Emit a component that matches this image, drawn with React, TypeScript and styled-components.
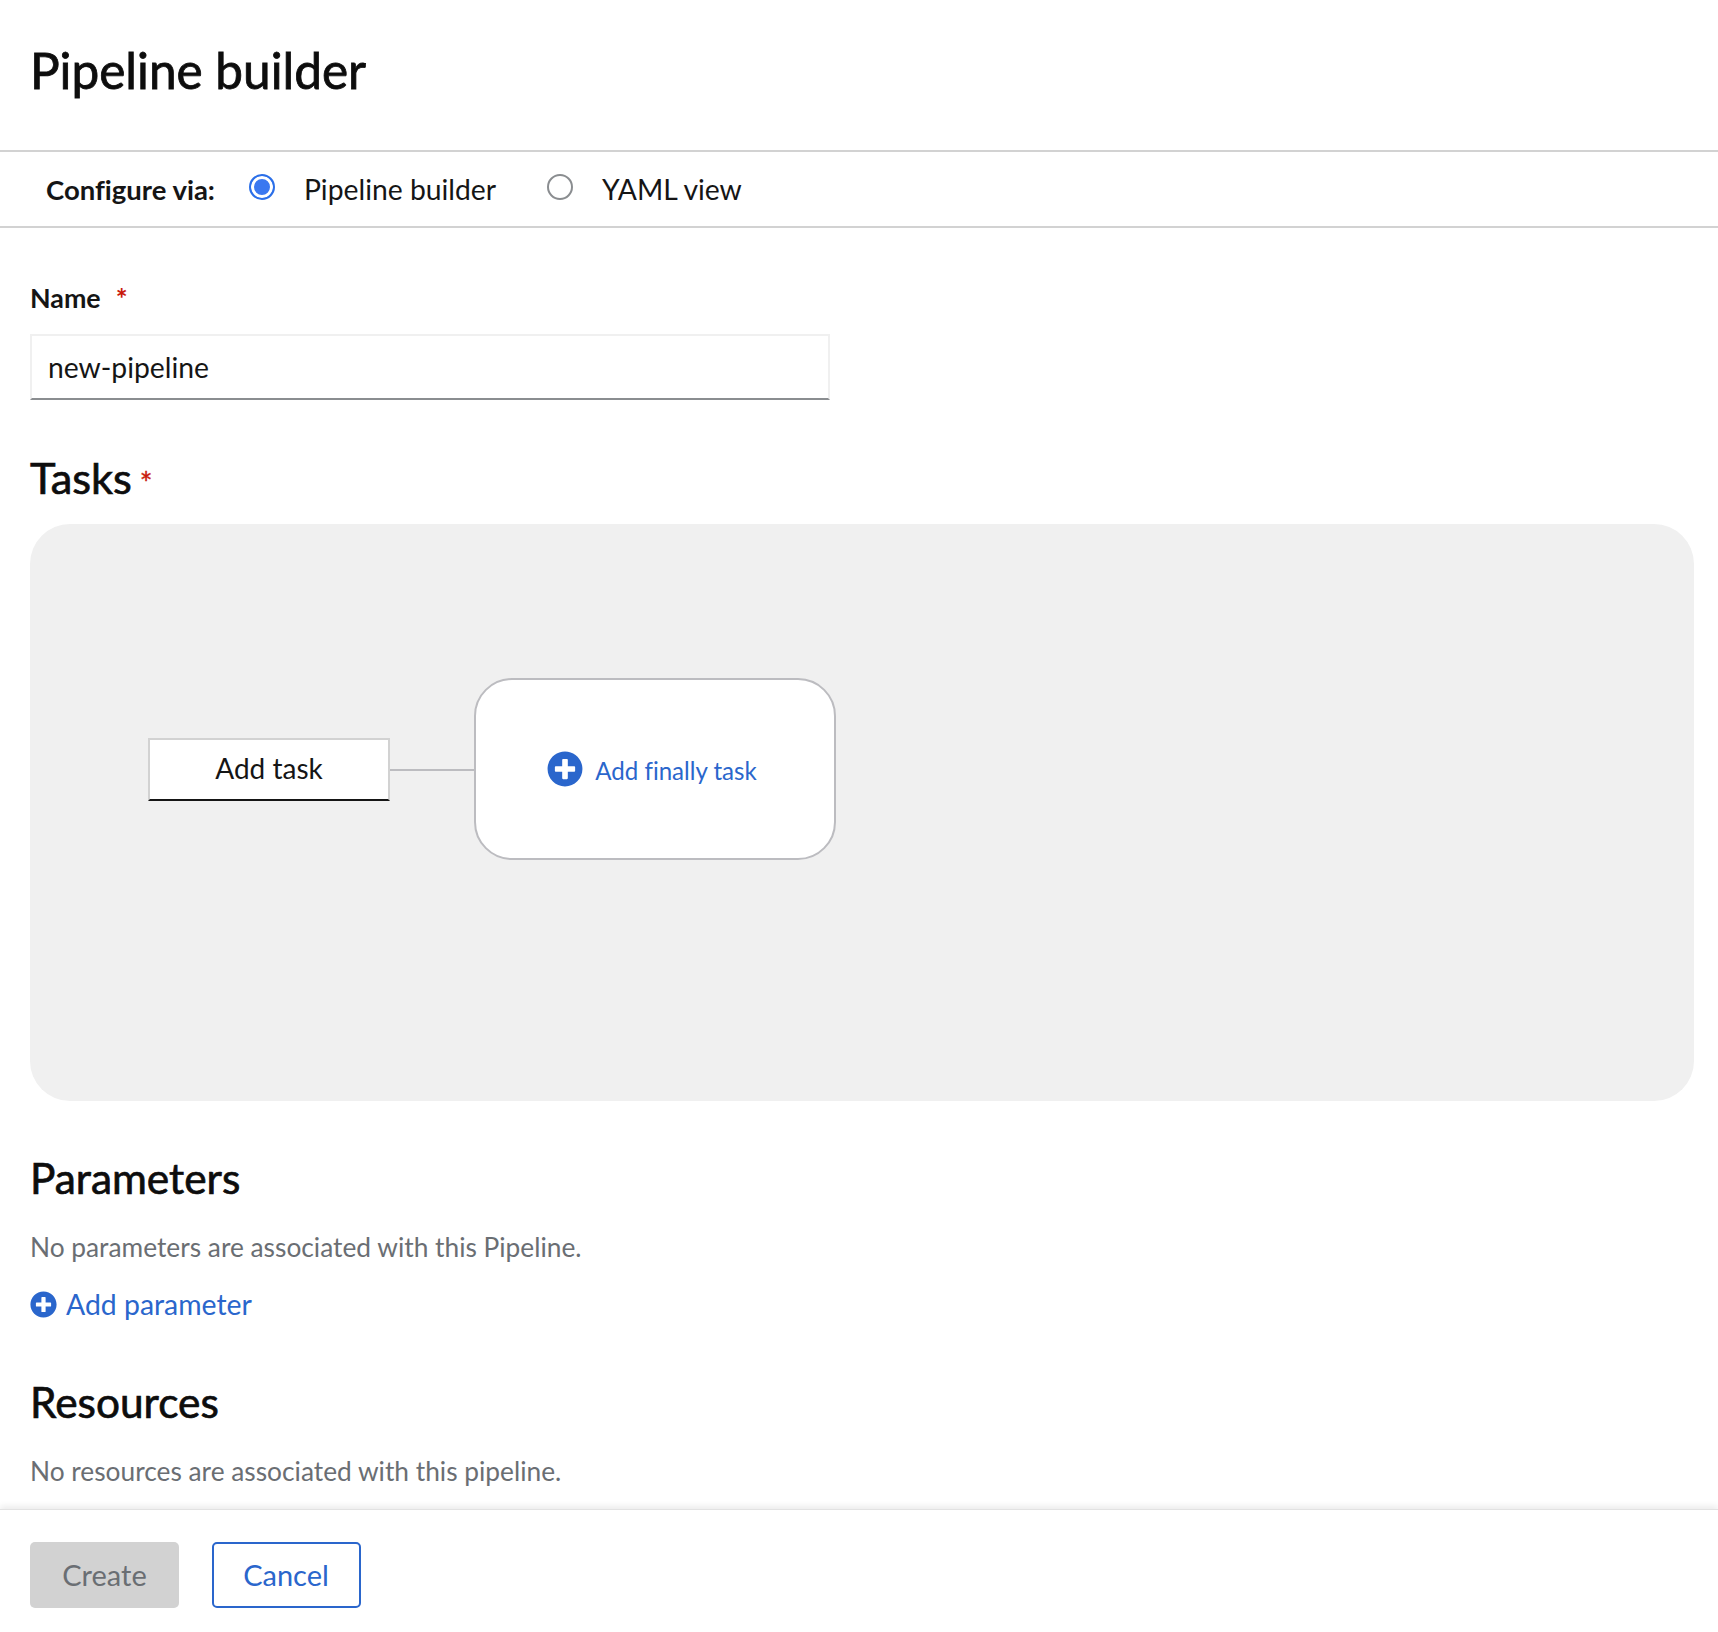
import React from "react";
import styled, { createGlobalStyle } from "styled-components";
import { FaPlusCircle } from "react-icons/fa";

const Global = createGlobalStyle`
  html, body { margin: 0; padding: 0; background: #fff; }
  body {
    font-family: Lato, "Liberation Sans", sans-serif;
    color: #151515;
    font-variant-ligatures: none;
  }
  * { box-sizing: border-box; }
`;

const Page = styled.div`
  height: 1632px;
  display: flex;
  flex-direction: column;
  overflow: hidden;
`;
const Header = styled.header`
  height: 150px;
  padding: 40px 30px 0;
`;
const Title = styled.h1`
  margin: 0;
  font-size: 49.5px;
  line-height: 60px;
  font-weight: 400;
  -webkit-text-stroke: 0.8px #0d0d0d;
  color: #0d0d0d;
`;
const ConfigBar = styled.div`
  height: 78px;
  border-top: 2px solid #d2d2d2;
  border-bottom: 2px solid #d2d2d2;
  padding-left: 46px;
  display: flex;
  align-items: center;
  font-size: 28.3px;
`;
const ConfigLabel = styled.span`
  font-weight: 700;
  font-size: 27.5px;
  margin-right: 34px;
`;
const RadioLabel = styled.label`
  display: flex;
  align-items: center;
  gap: 29px;
  margin-right: 51px;
`;
const Radio = styled.span<{ $on?: boolean }>`
  width: 26px;
  height: 26px;
  border-radius: 50%;
  margin-top: -4px;
  border: 2px solid ${(p) => (p.$on ? "#2b6fe8" : "#8a8d90")};
  background: ${(p) => (p.$on ? "#3b78f0" : "#fff")};
  box-shadow: ${(p) => (p.$on ? "inset 0 0 0 3px #fff" : "none")};
`;
const Main = styled.main`
  flex: 1;
  padding: 0 24px 0 30px;
`;
const FieldLabel = styled.div`
  margin-top: 53px;
  font-size: 26.8px;
  line-height: 34px;
  font-weight: 700;
  display: flex;
  gap: 15px;
`;
const Star = styled.span`
  color: #c9190b;
  font-size: 28px;
  font-weight: 700;
`;
const NameInput = styled.input`
  display: block;
  width: 800px;
  height: 66px;
  margin-top: 19px;
  padding: 0 16px;
  border: 2px solid #f0f0f0;
  border-bottom: 2px solid #8a8d90;
  font: 28.3px Lato, sans-serif;
  color: #151515;
  outline: none;
`;
const SectionTitle = styled.h2<{ $top: number; $size: number }>`
  margin: ${(p) => p.$top}px 0 0;
  font-size: ${(p) => p.$size}px;
  line-height: 52px;
  font-weight: 400;
  -webkit-text-stroke: 0.7px #0d0d0d;
  color: #0d0d0d;
  display: flex;
  align-items: baseline;
  gap: 8px;
`;
const SmallStar = styled.span`
  color: #c9190b;
  font-size: 30px;
  -webkit-text-stroke: 0.4px #c9190b;
`;
const Canvas = styled.div`
  margin-top: 16px;
  height: 577px;
  border-radius: 40px;
  background: #f0f0f0;
  padding: 154px 0 0 118px;
  display: flex;
  align-items: flex-start;
`;
const TaskNode = styled.div`
  margin-top: 60px;
  width: 242px;
  height: 63px;
  background: #fff;
  border: 2px solid #d2d2d2;
  border-bottom: 2px solid #151515;
  display: flex;
  align-items: center;
  justify-content: center;
  font-size: 28px;
  padding-bottom: 3px;
`;
const Connector = styled.div`
  margin-top: 91px;
  width: 84px;
  height: 2px;
  background: #bcbcc0;
`;
const FinallyNode = styled.div`
  width: 362px;
  height: 182px;
  padding-right: 6px;
  background: #fff;
  border: 2px solid #bcbcc0;
  border-radius: 38px;
  display: flex;
  align-items: center;
  justify-content: center;
  gap: 12px;
  font-size: 24.1px;
  color: #2a66cc;
`;
const FinallyText = styled.span`
  padding-top: 3px;
`;
const Muted = styled.p<{ $top: number }>`
  margin: ${(p) => p.$top}px 0 0;
  font-size: 26.3px;
  line-height: 34px;
  color: #6a6e73;
`;
const AddLink = styled.a`
  margin-top: 23px;
  display: flex;
  align-items: center;
  gap: 9px;
  font-size: 28.4px;
  line-height: 34px;
  color: #2a66cc;
`;
const Footer = styled.footer`
  height: 123px;
  border-top: 1px solid #e2e2e2;
  box-shadow: 0 -3px 6px rgba(0, 0, 0, 0.08);
  background: #fff;
  padding: 32px 30px 0;
  display: flex;
  gap: 32.5px;
  align-items: flex-start;
`;
const Button = styled.button<{ $primary?: boolean }>`
  width: 149px;
  height: 66px;
  padding-bottom: 2px;
  border-radius: 5px;
  font: 29px Lato, sans-serif;
  font-variant-ligatures: none;
  background: ${(p) => (p.$primary ? "#d2d2d2" : "#fff")};
  color: ${(p) => (p.$primary ? "#6a6e73" : "#2a66cc")};
  border: ${(p) => (p.$primary ? "none" : "2px solid #2a66cc")};
`;

export default function App() {
  return (
    <Page>
      <Global />
      <Header>
        <Title>Pipeline builder</Title>
      </Header>
      <ConfigBar>
        <ConfigLabel>Configure via:</ConfigLabel>
        <RadioLabel>
          <Radio $on />
          Pipeline builder
        </RadioLabel>
        <RadioLabel>
          <Radio />
          YAML view
        </RadioLabel>
      </ConfigBar>
      <Main>
        <FieldLabel>
          Name <Star>*</Star>
        </FieldLabel>
        <NameInput defaultValue="new-pipeline" />
        <SectionTitle $top={51} $size={43.4}>
          Tasks <SmallStar>*</SmallStar>
        </SectionTitle>
        <Canvas>
          <TaskNode>Add task</TaskNode>
          <Connector />
          <FinallyNode>
            <FaPlusCircle size={36} />
            <FinallyText>Add finally task</FinallyText>
          </FinallyNode>
        </Canvas>
        <SectionTitle $top={51} $size={42.4}>Parameters</SectionTitle>
        <Muted $top={26}>No parameters are associated with this Pipeline.</Muted>
        <AddLink>
          <FaPlusCircle size={27} />
          Add parameter
        </AddLink>
        <SectionTitle $top={55} $size={42.4}>Resources</SectionTitle>
        <Muted $top={26}>No resources are associated with this pipeline.</Muted>
      </Main>
      <Footer>
        <Button $primary>Create</Button>
        <Button>Cancel</Button>
      </Footer>
    </Page>
  );
}
